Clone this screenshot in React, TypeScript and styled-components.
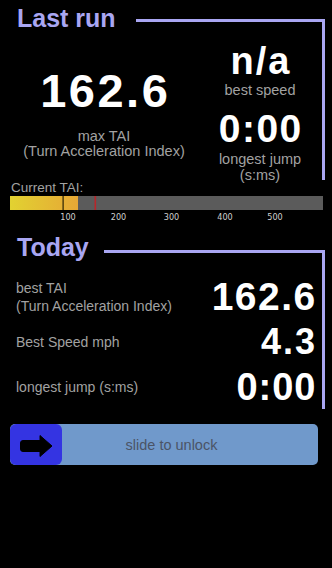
import React from "react";
import styled, { createGlobalStyle } from "styled-components";

const LAVENDER = "#a9a6f2";
const LABEL_GREY = "#a2a2a2";

const GlobalStyle = createGlobalStyle`
  html, body {
    margin: 0;
    padding: 0;
    background: #000;
  }
  body {
    font-family: "Liberation Sans", Arial, Helvetica, sans-serif;
    color: #fff;
  }
`;

const Screen = styled.div`
  width: 332px;
  height: 568px;
  background: #000;
  padding-top: 1px;
  box-sizing: border-box;
  overflow: hidden;
`;

const Section = styled.section<{ $top?: number }>`
  margin-top: ${(p) => p.$top ?? 0}px;
  padding-right: 7px;
`;

const SectionHeader = styled.div`
  display: flex;
  align-items: flex-end;
  height: 35px;
  padding-left: 17px;
`;

const SectionTitle = styled.h2`
  margin: 0;
  font-size: 25px;
  line-height: 35px;
  font-weight: 700;
  color: ${LAVENDER};
`;

const TitleRule = styled.div<{ $gap: number; $drop: number }>`
  flex: 1;
  margin-left: ${(p) => p.$gap}px;
  height: ${(p) => p.$drop}px;
  box-sizing: border-box;
  border-top: 3px solid ${LAVENDER};
  border-right: 3px solid ${LAVENDER};
`;

const FrameBody = styled.div<{ $height: number }>`
  height: ${(p) => p.$height}px;
  border-right: 3px solid ${LAVENDER};
`;

/* ---- last run ---- */

const LastRunGrid = styled.div`
  display: grid;
  grid-template-columns: 208px 1fr;
  padding-right: 10px;
  height: 100%;
`;

const StatColumn = styled.div<{ $pad: number }>`
  display: flex;
  flex-direction: column;
  align-items: center;
  text-align: center;
  padding-top: ${(p) => p.$pad}px;
`;

const BigValue = styled.div<{ $size: number; $spacing: number; $lh: number; $gap?: number }>`
  font-size: ${(p) => p.$size}px;
  line-height: ${(p) => p.$lh}px;
  letter-spacing: ${(p) => p.$spacing}px;
  margin-right: ${(p) => -p.$spacing}px;
  margin-top: ${(p) => p.$gap ?? 0}px;
  font-weight: 700;
  color: #fff;
`;

const StatLabel = styled.div<{ $lh?: number; $gap?: number }>`
  font-size: 14.5px;
  line-height: ${(p) => p.$lh ?? 15}px;
  margin-top: ${(p) => p.$gap ?? 0}px;
  color: ${LABEL_GREY};
  white-space: nowrap;
`;

/* ---- gauge ---- */

const GaugeBlock = styled.div`
  padding-left: 10px;
`;

const GaugeLabel = styled.div`
  font-size: 13.5px;
  line-height: 15px;
  padding-left: 1px;
  color: ${LABEL_GREY};
`;

const GaugeSvg = styled.svg`
  display: block;
`;

const TickText = styled.text`
  font-family: "Liberation Sans Narrow", "DejaVu Sans Condensed", "Liberation Sans", sans-serif;
  font-size: 9px;
  fill: #cfcfcf;
`;

/* ---- today ---- */

const TodayList = styled.div`
  padding: 10px 6px 0 16px;
`;

const TodayRow = styled.div<{ $height: number }>`
  display: flex;
  align-items: center;
  justify-content: space-between;
  height: ${(p) => p.$height}px;
`;

const RowLabel = styled.div`
  font-size: 14px;
  line-height: 18px;
  color: ${LABEL_GREY};
  white-space: nowrap;
`;

const RowValue = styled.div<{ $size: number; $spacing: number }>`
  font-size: ${(p) => p.$size}px;
  line-height: 44px;
  letter-spacing: ${(p) => p.$spacing}px;
  margin-right: ${(p) => -p.$spacing / 2}px;
  font-weight: 700;
  color: #fff;
`;

/* ---- slider ---- */

const SlideTrack = styled.div`
  display: flex;
  align-items: stretch;
  margin: 15px 14px 0 10px;
  height: 41px;
  border-radius: 5px;
  background: #7099cb;
`;

const SlideKnob = styled.div`
  width: 52px;
  border-radius: 6px;
  background: #3434e2;
  display: flex;
  align-items: center;
  justify-content: center;
`;

const SlideText = styled.div`
  flex: 1;
  display: flex;
  align-items: center;
  justify-content: center;
  padding-right: 37px;
  font-size: 14.5px;
  color: #4b5466;
`;

const ticks = [
  { x: 58, label: "100" },
  { x: 108.5, label: "200" },
  { x: 161.5, label: "300" },
  { x: 215, label: "400" },
  { x: 265, label: "500" },
];

function Gauge() {
  return (
    <GaugeBlock>
      <GaugeLabel>Current TAI:</GaugeLabel>
      <GaugeSvg width="313" height="28" viewBox="0 0 313 28">
        <defs>
          <linearGradient id="taiFill" x1="0" x2="1" y1="0" y2="0">
            <stop offset="0" stopColor="#e2d231" />
            <stop offset="1" stopColor="#e6a736" />
          </linearGradient>
        </defs>
        <rect x="0" y="1" width="313" height="14" fill="#5b5b5b" />
        <rect x="0" y="1" width="68" height="14" fill="url(#taiFill)" />
        <rect x="52.5" y="1" width="1.2" height="14" fill="#2a2204" />
        <rect x="84.5" y="1" width="1.6" height="14" fill="#b8262a" />
        {ticks.map((t) => (
          <TickText key={t.label} x={t.x} y="25" textAnchor="middle">
            {t.label}
          </TickText>
        ))}
      </GaugeSvg>
    </GaugeBlock>
  );
}

function ArrowIcon() {
  return (
    <svg width="52" height="40" viewBox="0 0 52 40">
      <path
        d="M13 15.5 H30 V10.5 L42 21 L30 31.5 V26.5 H13 A2.5 2.5 0 0 1 10.5 24 V18 A2.5 2.5 0 0 1 13 15.5 Z"
        fill="#000"
        stroke="#000"
        strokeWidth="1"
        strokeLinejoin="round"
      />
    </svg>
  );
}

export default function App() {
  return (
    <>
      <GlobalStyle />
      <Screen>
        <Section>
          <SectionHeader>
            <SectionTitle>Last run</SectionTitle>
            <TitleRule $gap={20} $drop={17} />
          </SectionHeader>
          <FrameBody $height={144}>
            <LastRunGrid>
              <StatColumn $pad={28}>
                <BigValue $size={47} $spacing={2.5} $lh={53}>
                  162.6
                </BigValue>
                <StatLabel $gap={12}>max TAI</StatLabel>
                <StatLabel>(Turn Acceleration Index)</StatLabel>
              </StatColumn>
              <StatColumn $pad={4}>
                <BigValue $size={38} $spacing={2} $lh={43}>
                  n/a
                </BigValue>
                <StatLabel>best speed</StatLabel>
                <BigValue $size={39} $spacing={1.5} $lh={44} $gap={9}>
                  0:00
                </BigValue>
                <StatLabel $lh={16}>longest jump</StatLabel>
                <StatLabel $lh={16}>(s:ms)</StatLabel>
              </StatColumn>
            </LastRunGrid>
          </FrameBody>
        </Section>

        <Gauge />

        <Section $top={7}>
          <SectionHeader>
            <SectionTitle>Today</SectionTitle>
            <TitleRule $gap={15} $drop={15} />
          </SectionHeader>
          <FrameBody $height={144}>
            <TodayList>
              <TodayRow $height={44}>
                <RowLabel>
                  best TAI
                  <br />
                  (Turn Acceleration Index)
                </RowLabel>
                <RowValue $size={39} $spacing={1.5}>
                  162.6
                </RowValue>
              </TodayRow>
              <TodayRow $height={45}>
                <RowLabel>Best Speed mph</RowLabel>
                <RowValue $size={36} $spacing={2}>
                  4.3
                </RowValue>
              </TodayRow>
              <TodayRow $height={45}>
                <RowLabel>longest jump (s:ms)</RowLabel>
                <RowValue $size={38} $spacing={1}>
                  0:00
                </RowValue>
              </TodayRow>
            </TodayList>
          </FrameBody>
        </Section>

        <SlideTrack>
          <SlideKnob>
            <ArrowIcon />
          </SlideKnob>
          <SlideText>slide to unlock</SlideText>
        </SlideTrack>
      </Screen>
    </>
  );
}
